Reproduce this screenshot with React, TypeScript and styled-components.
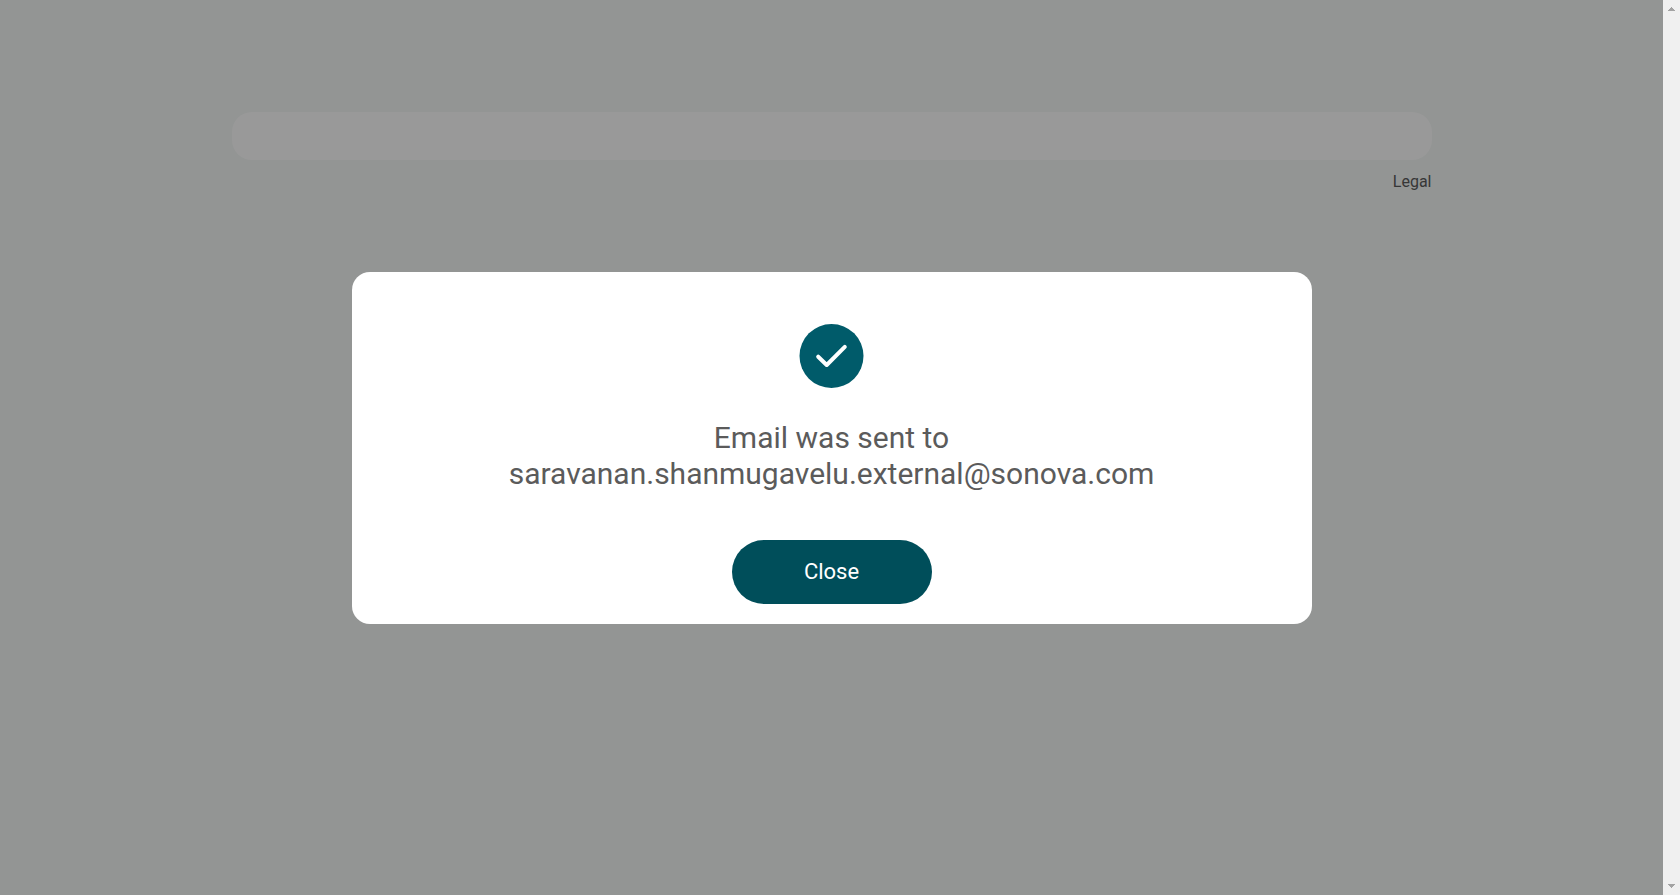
import React from "react";
import styled, { createGlobalStyle } from "styled-components";

const GlobalStyle = createGlobalStyle`
  *, *::before, *::after { box-sizing: border-box; }
  body {
    margin: 0;
    background: #f5f9f7;
    color: #5b5b5b;
    font-family: Roboto, "Liberation Sans", sans-serif;
  }
`;

const Shell = styled.div`
  display: grid;
  grid-template-columns: minmax(0, 1fr) 17px;
  height: 100vh;
`;

const Viewport = styled.div`
  position: relative;
  overflow: hidden;
`;

const Page = styled.main`
  display: flex;
  flex-direction: column;
  gap: 8px;
  width: 100%;
  max-width: 1200px;
  margin: 0 auto;
  padding-top: 112px;
`;

const ContentCard = styled.section`
  padding: 24px;
  border-radius: 20px;
  background: #ffffff;
`;

const Footer = styled.footer`
  display: flex;
  justify-content: flex-end;
`;

const FooterLink = styled.a`
  color: #5b5b5b;
  font-size: 16px;
  line-height: 28px;
  text-decoration: none;
`;

const Overlay = styled.div`
  position: absolute;
  inset: 0;
  display: flex;
  align-items: center;
  justify-content: center;
  background: rgba(0, 0, 0, 0.4);
`;

const Dialog = styled.div`
  display: flex;
  flex-direction: column;
  align-items: center;
  width: 100%;
  max-width: 960px;
  padding: 52px 32px 20px;
  border-radius: 18px;
  background: #ffffff;
`;

const SuccessIcon = styled.svg`
  display: block;
  width: 64px;
  height: 64px;
  overflow: visible;
`;

const Message = styled.h1`
  margin: 32px 0 48px;
  color: #5b5b5b;
  font-size: 30px;
  font-weight: 400;
  line-height: 36px;
  text-align: center;
`;

const MessageLine = styled.span`
  display: block;
`;

const CloseButton = styled.button`
  width: 200px;
  height: 64px;
  border: 0;
  border-radius: 32px;
  background: #004e5a;
  color: #ffffff;
  font-family: inherit;
  font-size: 22px;
  line-height: 28px;
  cursor: pointer;
`;

const ScrollTrack = styled.div`
  display: flex;
  flex-direction: column;
  align-items: center;
  justify-content: space-between;
  padding: 6px 0;
  background: #f0f0f0;
`;

const ScrollArrow = styled.svg`
  display: block;
  width: 7px;
  height: 5px;
  fill: #a3a3a3;
`;

export default function App() {
  return (
    <>
      <GlobalStyle />
      <Shell>
        <Viewport>
          <Page>
            <ContentCard />
            <Footer>
              <FooterLink href="#legal">Legal</FooterLink>
            </Footer>
          </Page>
          <Overlay>
            <Dialog role="dialog" aria-modal="true" aria-labelledby="dialog-message">
              <SuccessIcon viewBox="0 0 64 64" aria-hidden="true">
                <circle cx="31.5" cy="32" r="32" fill="#005b6a" />
                <path
                  d="M18.2 32.7 L26.7 41 L44.8 22.8"
                  fill="none"
                  stroke="#ffffff"
                  strokeWidth="4"
                  strokeLinecap="round"
                  strokeLinejoin="round"
                />
              </SuccessIcon>
              <Message id="dialog-message">
                <MessageLine>Email was sent to</MessageLine>
                <MessageLine>saravanan.shanmugavelu.external@sonova.com</MessageLine>
              </Message>
              <CloseButton type="button">Close</CloseButton>
            </Dialog>
          </Overlay>
        </Viewport>
        <ScrollTrack aria-hidden="true">
          <ScrollArrow viewBox="0 0 7 5" shapeRendering="crispEdges">
            <path d="M3 1h1v1h1v1h1v1h1v1H0V4h1V3h1V2h1z" />
          </ScrollArrow>
          <ScrollArrow viewBox="0 0 7 5" shapeRendering="crispEdges">
            <path d="M0 0h7v1H6v1H5v1H4v1H3V3H2V2H1V1H0z" />
          </ScrollArrow>
        </ScrollTrack>
      </Shell>
    </>
  );
}
